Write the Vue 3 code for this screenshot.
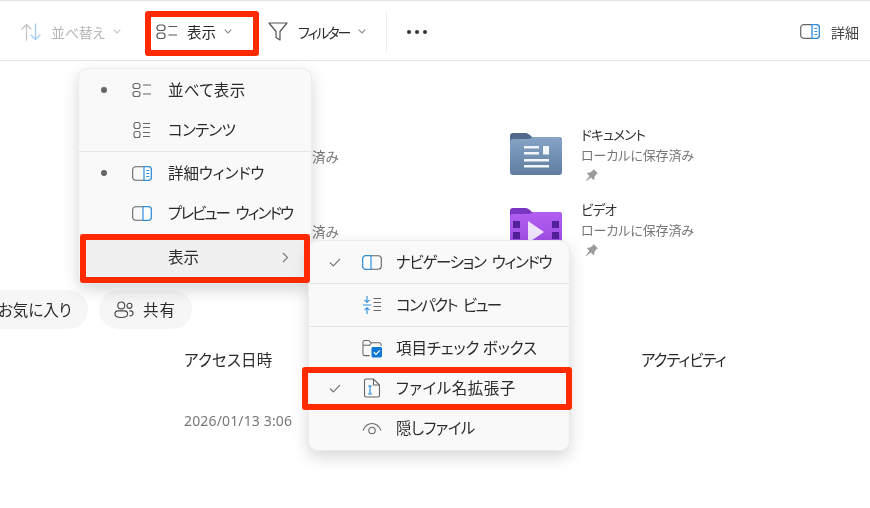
<script setup>
const ext = 'ファイル名拡張子'
</script>

<template>
  <div class="page">
    <header class="toolbar">
      <div class="tool tool-sort disabled">
        <svg class="ic-sort" width="20" height="18" viewBox="0 0 20 18" fill="none" stroke-linecap="round" stroke-linejoin="round"><path d="M5.5 17V1.5M1 6l4.500-4.500L10 6" stroke="#c4c4c4" stroke-width="1.300"/><path d="M14.500 1v15.500M10 12l4.500 4.500L19 12" stroke="#a5cdf0" stroke-width="1.300"/></svg>
        <span class="t-sort">並べ替え</span>
        <svg class="chev" width="8" height="5" viewBox="0 0 8 5" fill="none"><path d="M.7.7 4 4l3.300-3.300" stroke="#c6c6c6" stroke-width="1.100"/></svg>
      </div>
      <div class="tool tool-view">
        <svg width="22" height="15" viewBox="0 0 22 15" fill="none" stroke="#555" stroke-width="1.200"><rect x="1" y="1" width="8" height="5.500" rx="2.500"/><rect x="1" y="9" width="8" height="5.500" rx="2.500"/><path d="M12.500 2.500H21M12.500 11H21"/></svg>
        <span class="t-view">表示</span>
        <svg class="chev" width="8" height="5" viewBox="0 0 8 5" fill="none"><path d="M.7.7 4 4l3.300-3.300" stroke="#8a8a8a" stroke-width="1.100"/></svg>
      </div>
      <div class="tool tool-filter">
        <svg width="20" height="19" viewBox="0 0 20 19" fill="none" stroke="#555" stroke-width="1.200" stroke-linejoin="round"><path d="M1 1h18l-7 8.500V18l-4-2.500v-6z"/></svg>
        <span class="t-filter">フィルター</span>
        <svg class="chev" width="8" height="5" viewBox="0 0 8 5" fill="none"><path d="M.7.7 4 4l3.300-3.300" stroke="#8a8a8a" stroke-width="1.100"/></svg>
      </div>
      <i class="sep"></i>
      <div class="dots"><i></i><i></i><i></i></div>
      <div class="tool tool-detail">
        <svg width="20" height="15" viewBox="0 0 20 15" fill="none"><rect x=".7" y=".7" width="18.600" height="13.600" rx="3" stroke="#666" stroke-width="1.200"/><path d="M12 .7h4.300a3 3 0 0 1 3 3v7.600a3 3 0 0 1-3 3H12z" fill="#fff" stroke="#2f8fe0" stroke-width="1.300"/><path d="M14.300 4.500h3M14.300 7.500h3M14.300 10.500h3" stroke="#2f8fe0"/></svg>
        <span class="t-detail">詳細</span>
      </div>
    </header>

    <main class="content">
      <section class="tiles">
        <div class="frag">済み</div>
        <div class="tile">
          <svg class="folder" width="52" height="42" viewBox="0 0 52 42"><defs><linearGradient id="fb" x1="0" y1="0" x2="0" y2="1"><stop offset="0" stop-color="#86a5c6"/><stop offset="1" stop-color="#5f7d9f"/></linearGradient></defs><path d="M0 3a3 3 0 0 1 3-3h12c3 0 5 2 7 4h27a3 3 0 0 1 3 3v4H0z" fill="#4f6a8a"/><path d="M0 9a3 3 0 0 1 3-3h15c2 0 3-1 5-2h26a3 3 0 0 1 3 3v32a3 3 0 0 1-3 3H3a3 3 0 0 1-3-3z" fill="url(#fb)"/><path d="M14 13h15v2.500H14zM14 19h15v2.500H14zM33 13h6v8.500h-6z" fill="#f2f5f9"/><path d="M14 26h25v2.500H14zM14 32h25v2.500H14z" fill="#f2f5f9"/></svg>
          <div class="meta"><div class="name">ドキュメント</div><div class="status">ローカルに保存済み</div>
            <svg class="pin" width="14" height="14" viewBox="0 0 14 14"><path d="M8.500 1l4.500 4.500-1.500.6-2.300 3.200.3 1.700-1 1-2.500-2.500L1.500 13 1 12.500l3.500-4.500L2 5.500l1-1 1.700.3 3.200-2.300z" fill="#9a9a9a"/></svg>
          </div>
        </div>
        <div class="frag">済み</div>
        <div class="tile">
          <svg class="folder" width="52" height="42" viewBox="0 0 52 42"><defs><linearGradient id="fv" x1="0" y1="0" x2="0" y2="1"><stop offset="0" stop-color="#b25ff0"/><stop offset="1" stop-color="#9848e0"/></linearGradient></defs><path d="M0 3a3 3 0 0 1 3-3h12c3 0 5 2 7 4h27a3 3 0 0 1 3 3v4H0z" fill="#7a35c2"/><path d="M0 9a3 3 0 0 1 3-3h15c2 0 3-1 5-2h26a3 3 0 0 1 3 3v32a3 3 0 0 1-3 3H3a3 3 0 0 1-3-3z" fill="url(#fv)"/><path d="M3 13h7v7H3zM3 24h7v7H3zM42 13h7v7h-7zM42 24h7v7h-7z" fill="#52219a"/><path d="M18 13l16 11-16 11z" fill="#efe4fb"/></svg>
          <div class="meta"><div class="name">ビデオ</div><div class="status">ローカルに保存済み</div>
            <svg class="pin" width="14" height="14" viewBox="0 0 14 14"><path d="M8.500 1l4.500 4.500-1.500.6-2.300 3.200.3 1.700-1 1-2.500-2.500L1.500 13 1 12.500l3.500-4.500L2 5.500l1-1 1.700.3 3.200-2.300z" fill="#9a9a9a"/></svg>
          </div>
        </div>
      </section>

      <section class="chips">
        <div class="chip chip-fav">お気に入り</div>
        <div class="chip chip-share">
          <svg width="20" height="19" viewBox="0 0 22 19" fill="none" stroke="#444" stroke-width="1.200"><circle cx="8" cy="5" r="3.800"/><path d="M1 14.500c0-2 1.500-3.500 3.500-3.500h7c2 0 3.500 1.500 3.500 3.500 0 2.500-3 3.800-7 3.800s-7-1.300-7-3.800z"/><circle cx="17" cy="5.500" r="2.800"/><path d="M17 11h1c2 0 3 1 3 2.500s-1.500 2.800-4 3"/></svg>
          <span>共有</span>
        </div>
      </section>

      <section class="heads"><span>アクセス日時</span><span class="h2">アクティビティ</span></section>
      <div class="date">2026/01/13 3:06</div>
    </main>

    <nav class="menu menu-main">
      <div class="row"><b class="dot"></b>
        <svg class="ic" width="20" height="16" viewBox="0 0 20 16" fill="none" stroke="#666" stroke-width="1.100"><rect x="1" y="1.500" width="7" height="5" rx="2.300"/><rect x="1" y="9.500" width="7" height="5" rx="2.300"/><path d="M11 3h8M11 12h8"/></svg>
        <span class="label s-narrow2">並べて表示</span></div>
      <div class="row"><b></b>
        <svg class="ic" width="20" height="18" viewBox="0 0 20 18" fill="none" stroke="#666" stroke-width="1.100"><rect x="2" y="1.500" width="6" height="6" rx="2"/><rect x="2" y="10.500" width="6" height="6" rx="2"/><path d="M11 2.500h7M11 6.500h7M11 11.500h7M11 15.500h7"/></svg>
        <span class="label s-contents">コンテンツ</span></div>
      <hr class="line">
      <div class="row"><b class="dot"></b>
        <svg class="ic" width="20" height="15" viewBox="0 0 20 15" fill="none"><rect x=".7" y=".7" width="18.600" height="13.600" rx="3" stroke="#666" stroke-width="1.100"/><path d="M12 .7h4.300a3 3 0 0 1 3 3v7.600a3 3 0 0 1-3 3H12z" fill="#fff" stroke="#2f8fe0" stroke-width="1.200"/><path d="M14.300 4.500h3M14.300 7.500h3M14.300 10.500h3" stroke="#2f8fe0"/></svg>
        <span class="label">詳細ウィンドウ</span></div>
      <div class="row"><b></b>
        <svg class="ic" width="20" height="15" viewBox="0 0 20 15" fill="none"><rect x=".7" y=".7" width="18.600" height="13.600" rx="3" stroke="#666" stroke-width="1.100"/><path d="M11 .7h5.300a3 3 0 0 1 3 3v7.600a3 3 0 0 1-3 3H11z" fill="#fff" stroke="#2f8fe0" stroke-width="1.200"/></svg>
        <span class="label s-preview">プレビュー ウィンドウ</span></div>
      <hr class="line">
      <div class="row hover"><b></b><i class="ic"></i><span class="label">表示</span>
        <svg class="arrow" width="7" height="11" viewBox="0 0 7 11" fill="none"><path d="M1 1l4.500 4.500L1 10" stroke="#777" stroke-width="1.100"/></svg>
      </div>
    </nav>

    <nav class="menu menu-sub">
      <div class="row"><svg class="check" width="12" height="9" viewBox="0 0 12 9" fill="none"><path d="M1 4.500 4.300 8 11 1" stroke="#777" stroke-width="1.100"/></svg>
        <svg class="ic" width="20" height="15" viewBox="0 0 20 15" fill="none"><rect x=".7" y=".7" width="18.600" height="13.600" rx="3" stroke="#666" stroke-width="1.100"/><path d="M9 .7H3.700a3 3 0 0 0-3 3v7.600a3 3 0 0 0 3 3H9z" fill="#fff" stroke="#2f8fe0" stroke-width="1.200"/></svg>
        <span class="label s-nav">ナビゲーション ウィンドウ</span></div>
      <hr class="line">
      <div class="row"><i class="check"></i>
        <svg class="ic" width="20" height="18" viewBox="0 0 20 18" fill="none" stroke-width="1.100"><path d="M5 0v6M2.500 3.800 5 6.300l2.500-2.500M5 18v-6M2.500 14.200 5 11.700l2.500 2.500M1 9h8" stroke="#2f8fe0"/><path d="M11.500 2.500H19M11.500 6.500H19M11.500 10.500H19M11.500 14.500H19" stroke="#666"/></svg>
        <span class="label s-compact">コンパクト ビュー</span></div>
      <hr class="line">
      <div class="row"><i class="check"></i>
        <svg class="ic" width="21" height="19" viewBox="0 0 21 19" fill="none"><path d="M8 17H3a2 2 0 0 1-2-2V3a2 2 0 0 1 2-2h4l2.500 2.500H18a2 2 0 0 1 2 2V7M1 6h7l2-2.500" stroke="#666" stroke-width="1.100"/><rect x="10" y="8" width="11" height="11" rx="1.500" fill="#0f78d4"/><path d="M12.500 13.500l2.200 2.200 4-4.200" stroke="#fff" stroke-width="1.300"/></svg>
        <span class="label">項目チェック ボックス</span></div>
      <div class="row"><svg class="check" width="12" height="9" viewBox="0 0 12 9" fill="none"><path d="M1 4.500 4.300 8 11 1" stroke="#777" stroke-width="1.100"/></svg>
        <svg class="ic" width="20" height="20" viewBox="0 0 20 20" fill="none"><path d="M2.500 2.500A1.500 1.500 0 0 1 4 1h7.500l6 6v10.500A1.500 1.500 0 0 1 16 19H4a1.500 1.500 0 0 1-1.500-1.500zM11.500 1v6h6" stroke="#666" stroke-width="1.100"/><path d="M6 8h4M6 16h4M8 8v8" stroke="#2f8fe0" stroke-width="1.200"/></svg>
        <span class="label s-ext">{{ ext }}</span></div>
      <div class="row"><i class="check"></i>
        <svg class="ic" width="20" height="13" viewBox="0 0 20 13" fill="none" stroke="#666" stroke-width="1.100"><path d="M1 8.500C3 4 6.300 1.500 10 1.500S17 4 19 8.500"/><circle cx="10" cy="8.500" r="3.200"/></svg>
        <span class="label s-hidden">隠しファイル</span></div>
    </nav>

    <div class="mark mark-view"></div>
    <div class="mark mark-show"></div>
    <div class="mark mark-ext"></div>
  </div>
</template>

<style>
html, body { margin: 0; background: #fff; }
</style>

<style scoped>
.page {
  position: relative;
  width: 870px;
  height: 508px;
  overflow: hidden;
  background: #fff;
  color: #2b2b2b;
  font-family: "Noto Sans CJK JP", "Liberation Sans", sans-serif;
  font-feature-settings: "palt";
  filter: blur(.4px);
}
.toolbar {
  display: flex;
  align-items: center;
  height: 57px;
  padding-top: 2px;
  box-sizing: content-box;
  border-top: 1px solid #e3e3e3;
  border-bottom: 1px solid #e3e3e3;
  font-size: 14px;
}
.tool { display: flex; align-items: center; }
.tool-sort { margin-left: 21px; }
.t-sort { margin: 0 7px 0 10px; width: 55px; color: #b8b8b8; letter-spacing: -.3px; white-space: nowrap; }
.tool-view { margin-left: 35px; }
.t-view { margin: 0 8px 0 9px; font-size: 14.500px; }
.tool-filter { margin-left: 36px; }
.t-filter { margin: 0 8px 0 10px; width: 52px; white-space: nowrap; letter-spacing: -2px; }
.sep { width: 1px; height: 41px; background: #ededed; margin-left: 20px; }
.dots { display: flex; gap: 4px; margin-left: 20px; }
.dots i { width: 4px; height: 4px; border-radius: 50%; background: #333; }
.tool-detail { margin-left: auto; margin-right: 11px; }
.t-detail { margin-left: 11px; color: #444; }

.content { padding-top: 72px; }
.tiles {
  display: grid;
  grid-template-columns: 198px 1fr;
  grid-auto-rows: 75px;
  margin-left: 312px;
}
.frag { color: #777; font-size: 13.500px; line-height: 18px; padding-top: 14px; }
.tile { display: flex; gap: 19px; position: relative; }
.folder { flex: none; }
.meta { margin-top: -9px; white-space: nowrap; }
.name { font-size: 13.500px; line-height: 21px; color: #333; letter-spacing: -.8px; }
.status { font-size: 13px; line-height: 20px; color: #777; letter-spacing: -.1px; }
.pin { display: block; margin: 3px 0 0 4px; }

.chips { display: flex; gap: 11px; margin: 7px 0 0 -20px; }
.chip {
  display: flex; align-items: center; justify-content: center;
  height: 39px; border-radius: 20px; background: #f6f6f6;
  font-size: 15.500px;
}
.chip-fav { width: 108px; padding: 0 0 2px 18px; box-sizing: border-box; justify-content: flex-start; white-space: nowrap; }
.chip-share { width: 93px; padding-left: 1px; box-sizing: border-box; gap: 9px; }
.chip-share span { letter-spacing: 1px; margin-right: 2px; padding-bottom: 2px; font-size: 15.500px; }
.heads { display: flex; margin: 19px 0 0 184px; font-size: 15.500px; line-height: 22px; white-space: nowrap; }
.heads span { flex: none; width: 457px; letter-spacing: .2px; }
.heads .h2 { letter-spacing: -1.100px; }
.date { margin: 42px 0 0 184px; font-size: 14px; line-height: 18px; color: #777; font-family: "Noto Sans", "Noto Sans CJK JP", sans-serif; letter-spacing: .15px; }

.menu {
  position: absolute;
  box-sizing: border-box;
  background: #f9f9f9;
  border: 1px solid #ececec;
  border-radius: 10px;
  box-shadow: 0 6px 16px rgba(0, 0, 0, .16);
  padding: 1px 7px;
  font-size: 15.500px;
}
.menu-main { left: 78px; top: 68px; width: 234px; height: 216px; }
.menu-sub { left: 308px; top: 240px; width: 262px; height: 211px; }
.row {
  display: flex;
  align-items: center;
  height: 40px;
  border-radius: 4px;
  white-space: nowrap;
  color: #2b2b2b;
}
.row b { width: 8px; height: 8px; margin: 0 25px 0 13px; flex: none; }
.row b.dot { width: 6px; height: 6px; margin: 0 25px 0 15px; border-radius: 50%; background: #666; }
.ic { flex: none; width: 20px; margin-right: 16px; }
.label { padding-bottom: 2px; letter-spacing: -.1px; }
.s-narrow2 { letter-spacing: .3px; }
.s-contents { letter-spacing: -.7px; }
.s-preview { letter-spacing: -1.900px; word-spacing: 5px; }
.s-nav { letter-spacing: -1.300px; word-spacing: 4px; }
.s-compact { letter-spacing: -1.600px; word-spacing: 4px; }
.s-ext { letter-spacing: .5px; }
.s-hidden { letter-spacing: -.6px; }
.menu-main .row.hover { background: #f0f0f0; margin: 2px 0 0; height: 40px; }
.arrow { margin-left: auto; margin-right: 15px; }
.line { border: 0; height: 1px; background: #e5e5e5; margin: 1px -7px; }
.menu-sub .check { flex: none; width: 12px; margin: 0 21px 0 13px; }
.menu-sub .row .ic { margin-right: 14px; margin-left: 0; }

.mark { position: absolute; box-sizing: border-box; border: 6px solid #ff2a00; border-radius: 3px; pointer-events: none; }
.mark-view { left: 145px; top: 11px; width: 114px; height: 45px; }
.mark-show { left: 80px; top: 234px; width: 230px; height: 49px; border-width: 6.500px; }
.mark-ext { left: 302px; top: 367px; width: 270px; height: 43px; }
</style>
